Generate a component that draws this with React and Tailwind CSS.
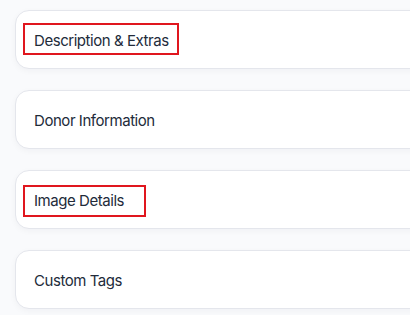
export default function App() {
  const items = [
    { label: "Description & Extras", box: { top: 12, width: 156 } },
    { label: "Donor Information" },
    { label: "Image Details", box: { top: 14, width: 123 } },
    { label: "Custom Tags" },
  ];
  return (
    <div className="w-[410px] h-[315px] overflow-hidden bg-[#f9fafc] pt-[10px] pl-[15px]" style={{ fontFamily: "Inter, 'Noto Sans', sans-serif" }}>
      <div className="flex flex-col gap-[21px] w-[430px]">
        {items.map((it) => (
          <div key={it.label} className="relative h-[59px] flex items-center pl-[18px] pt-[2px] bg-white border border-[#e4e6ec] rounded-[14px] shadow-[0_2px_6px_rgba(15,23,42,0.04)]">
            <span className="text-[15px] tracking-[-0.45px] text-[#222b3a] leading-none">{it.label}</span>
            {it.box && (
              <div className="absolute left-[7px] h-[32px] border-2 border-[#e0161e]" style={{ top: it.box.top, width: it.box.width }} />
            )}
          </div>
        ))}
      </div>
    </div>
  );
}
